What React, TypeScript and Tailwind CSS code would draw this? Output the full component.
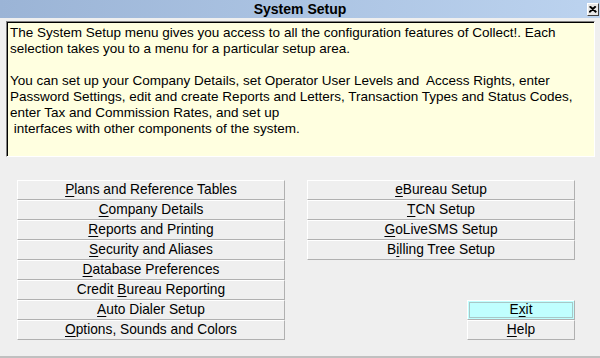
import type { ReactNode } from 'react';

const intro = [
  'The System Setup menu gives you access to all the configuration features of Collect!. Each',
  'selection takes you to a menu for a particular setup area.',
  '',
  'You can set up your Company Details, set Operator User Levels and  Access Rights, enter',
  'Password Settings, edit and create Reports and Letters, Transaction Types and Status Codes,',
  'enter Tax and Commission Rates, and set up',
  ' interfaces with other components of the system.',
];

// label split into [before, hotkey, after]
const leftButtons: [string, string, string][] = [
  ['', 'P', 'lans and Reference Tables'],
  ['', 'C', 'ompany Details'],
  ['', 'R', 'eports and Printing'],
  ['', 'S', 'ecurity and Aliases'],
  ['', 'D', 'atabase Preferences'],
  ['Credit ', 'B', 'ureau Reporting'],
  ['', 'A', 'uto Dialer Setup'],
  ['', 'O', 'ptions, Sounds and Colors'],
];

const rightButtons: [string, string, string][] = [
  ['', 'e', 'Bureau Setup'],
  ['', 'T', 'CN Setup'],
  ['', 'G', 'oLiveSMS Setup'],
  ['B', 'i', 'lling Tree Setup'],
];

function Label({ parts }: { parts: [string, string, string] }) {
  return (
    <span className="whitespace-pre">
      {parts[0]}
      <u className="underline-offset-[2px]">{parts[1]}</u>
      {parts[2]}
    </span>
  );
}

function Btn({ children, active }: { children: ReactNode; active?: boolean }) {
  return (
    <button
      className={
        'flex h-[20px] w-full items-center justify-center border border-t-white border-l-white border-r-[#b0b0b0] border-b-[#b0b0b0] text-[13.75px] leading-none text-black ' +
        (active ? 'bg-[#c0ffff] shadow-[inset_0_0_0_1px_#c0ffff,inset_0_0_0_2px_#a8c8c8]' : 'bg-[#efefef]')
      }
    >
      {children}
    </button>
  );
}

export default function App() {
  return (
    <div className="flex h-[358px] w-[600px] flex-col bg-[#efefef] font-['Liberation_Sans',Arial,sans-serif] text-black">
      <div className="relative flex h-[18px] items-center justify-center bg-gradient-to-r from-[#9bb4d6] to-[#bcd3ef]">
        <span className="text-[14px] font-bold leading-none">System Setup</span>
        <div className="absolute right-[1px] top-[3px] flex h-[13px] w-[12px] items-center justify-center border border-t-white border-l-white border-r-[#404040] border-b-[#404040] bg-[#e8e8e8]">
          <svg width="8" height="7" viewBox="0 0 8 7">
            <path d="M0.5 0.5 L7 6.5 M1.5 0.5 L7.5 6 M7 0.5 L0.5 6.5 M6 0.5 L0 6" stroke="#000" strokeWidth="1.2" />
          </svg>
        </div>
      </div>

      <div className="ml-[6px] mr-[5px] mt-[3px] h-[136px] border border-t-[#808080] border-l-[#808080] border-r-white border-b-white bg-[#ffffe0] pl-[3px] pt-[3px] text-[13.5px] leading-[16px] shadow-[inset_1px_1px_0_#000]">
        {intro.map((line, i) => (
          <div key={i} className="h-[16px] whitespace-pre">
            {line}
          </div>
        ))}
      </div>

      <div className="mt-[23px] flex gap-[22px] pl-[17px]">
        <div className="flex w-[268px] flex-col">
          {leftButtons.map((b) => (
            <Btn key={b.join('')}>
              <Label parts={b} />
            </Btn>
          ))}
        </div>
        <div className="flex w-[268px] flex-col">
          {rightButtons.map((b) => (
            <Btn key={b.join('')}>
              <Label parts={b} />
            </Btn>
          ))}
          <div className="mt-[40px] ml-auto flex w-[108px] flex-col">
            <Btn active>
              <Label parts={['E', 'x', 'it']} />
            </Btn>
            <Btn>
              <Label parts={['', 'H', 'elp']} />
            </Btn>
          </div>
        </div>
      </div>

      <div className="flex-1" />
      <div className="h-[2px] bg-[#c0c0c0]" />
    </div>
  );
}
